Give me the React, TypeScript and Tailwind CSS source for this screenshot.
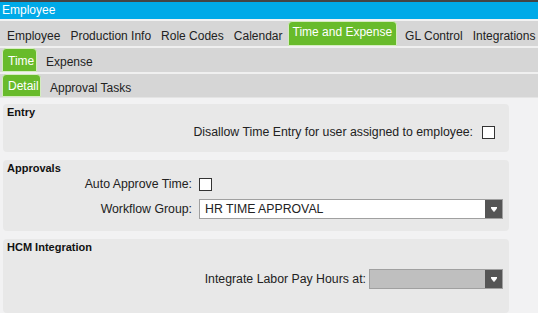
import React from 'react';

const font = { fontFamily: '"Liberation Sans", Arial, sans-serif' };

const DropArrow = () => (
  <svg width="8" height="5" viewBox="0 0 8 5">
    <path d="M1 0.5h6M1.5 1.5h5L4 4.5z" stroke="#fff" fill="#fff" strokeWidth="1" />
  </svg>
);

const Checkbox = () => (
  <div className="w-[13px] h-[13px] border border-[#333] bg-white shrink-0" />
);

const GreenTab: React.FC<{ label: string; className?: string }> = ({ label, className = '' }) => (
  <div
    className={`bg-[#68bb2b] text-white border border-[#d4ecbf] rounded-t-[4px] whitespace-nowrap shrink-0 ${className}`}
  >
    {label}
  </div>
);

const Panel: React.FC<{ title: string; height: string; children: React.ReactNode }> = ({
  title,
  height,
  children,
}) => (
  <div className={`bg-[#e8e8e8] rounded-[4px] w-[506px] pt-[2px] px-[4px] ${height}`}>
    <div className="text-[11px] font-bold leading-[13px] text-[#111]">{title}</div>
    {children}
  </div>
);

export default function App() {
  const topTabs = ['Employee', 'Production Info', 'Role Codes', 'Calendar'];

  return (
    <div className="w-[538px] h-[313px] overflow-hidden bg-[#f2f2f3] text-[12px] text-[#222] whitespace-nowrap" style={font}>
      {/* title bar */}
      <div className="h-[2px] bg-[#444]" />
      <div className="h-[17px] bg-[#00aae8] text-white leading-[17px] pl-[2px]">Employee</div>
      <div className="h-[2px] bg-[#f2f2f2]" />

      {/* first tab row */}
      <div className="h-[25px] bg-[#d6d6d6] flex items-end pl-[2px]">
        {topTabs.map((t) => (
          <div key={t} className="h-[25px] leading-[31px] px-[5px] shrink-0">
            {t}
          </div>
        ))}
        <GreenTab label="Time and Expense" className="h-[25px] leading-[21px] px-[4px]" />
        <div className="h-[25px] leading-[31px] pl-[8px] pr-[5px] shrink-0">GL Control</div>
        <div className="h-[25px] leading-[31px] px-[5px] shrink-0">Integrations</div>
      </div>
      <div className="h-[2px] bg-[#f0f0f0]" />

      {/* second tab row */}
      <div className="h-[24px] bg-[#d6d6d6] flex items-end pl-[2px]">
        <GreenTab label="Time" className="h-[24px] leading-[24px] px-[5px] w-[35px]" />
        <div className="h-[24px] leading-[29px] pl-[9px]">Expense</div>
      </div>
      <div className="h-[2px] bg-[#f0f0f0]" />

      {/* third tab row */}
      <div className="h-[23px] bg-[#d6d6d6] flex items-end pl-[2px]">
        <GreenTab label="Detail" className="h-[23px] leading-[23px] px-[5px] w-[39px]" />
        <div className="h-[23px] leading-[28px] pl-[9px]">Approval Tasks</div>
      </div>
      <div className="h-[1px] bg-[#e4e4e4]" />

      {/* content */}
      <div className="flex flex-col gap-[8px] pl-[3px] pt-[6px] text-[12.3px]">
        <Panel title="Entry" height="h-[48px]">
          <div className="flex items-center justify-end h-[20px] mt-[3px] pr-[10px] gap-[9px]">
            <span>Disallow Time Entry for user assigned to employee:</span>
            <Checkbox />
          </div>
        </Panel>

        <Panel title="Approvals" height="h-[71px]">
          <div className="flex items-center h-[16px] mt-[1px]">
            <div className="w-[185px] text-right">Auto Approve Time:</div>
            <div className="ml-[7px]">
              <Checkbox />
            </div>
          </div>
          <div className="flex items-center h-[20px] mt-[7px]">
            <div className="w-[185px] text-right">Workflow Group:</div>
            <div className="ml-[7px] w-[304px] h-[20px] border border-[#a0a0a0] bg-white flex">
              <div className="flex-1 leading-[18px] pl-[5px]">HR TIME APPROVAL</div>
              <div className="w-[17px] bg-[#555] flex items-center justify-center">
                <DropArrow />
              </div>
            </div>
          </div>
        </Panel>

        <Panel title="HCM Integration" height="h-[74px]">
          <div className="flex items-center justify-end h-[20px] mt-[15px] pr-[2px]">
            <span>Integrate Labor Pay Hours at:</span>
            <div className="ml-[3px] w-[134px] h-[20px] border border-[#a0a0a0] bg-[#bfbfbf] flex">
              <div className="flex-1" />
              <div className="w-[17px] bg-[#555] flex items-center justify-center">
                <DropArrow />
              </div>
            </div>
          </div>
        </Panel>
      </div>
    </div>
  );
}
